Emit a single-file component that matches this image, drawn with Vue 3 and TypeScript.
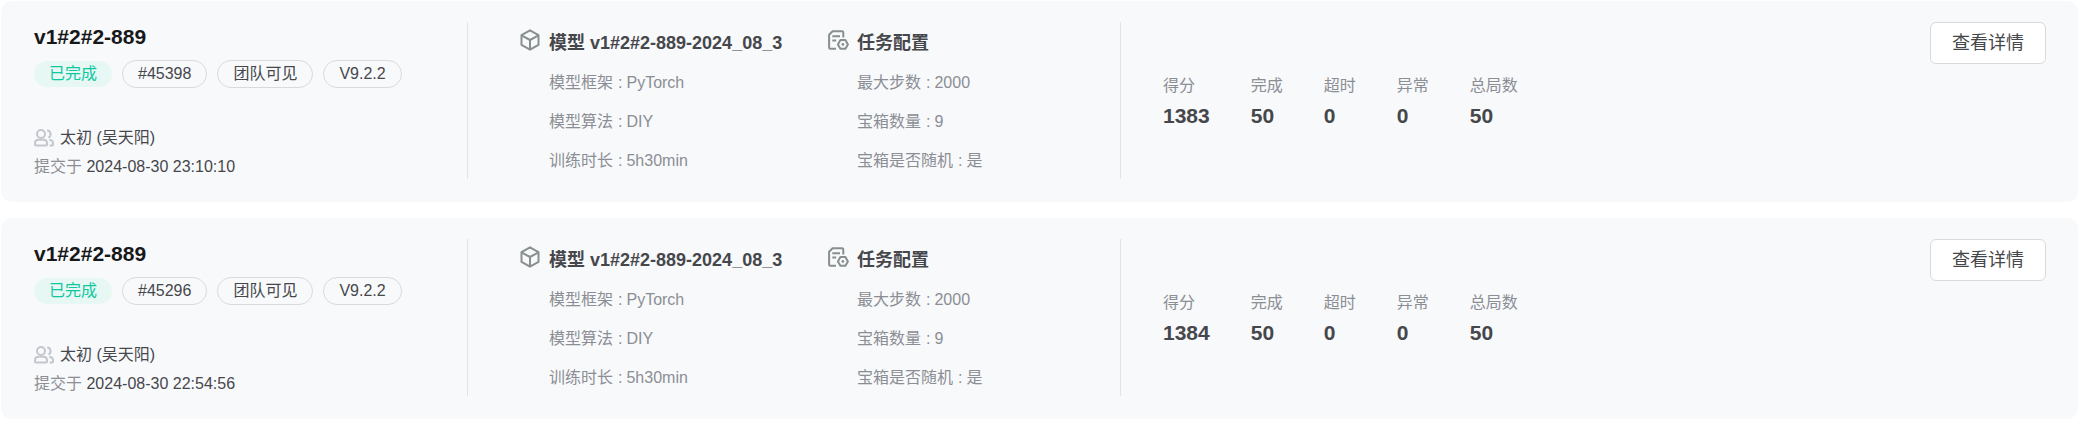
<script setup lang="ts">
interface Pair {
  label: string
  value: string
}

interface Evaluation {
  title: string
  status: string
  tags: string[]
  author: string
  submittedAt: string
  modelName: string
  model: Pair[]
  config: Pair[]
  stats: Pair[]
}

const model: Pair[] = [
  { label: '模型框架', value: 'PyTorch' },
  { label: '模型算法', value: 'DIY' },
  { label: '训练时长', value: '5h30min' },
]

const config: Pair[] = [
  { label: '最大步数', value: '2000' },
  { label: '宝箱数量', value: '9' },
  { label: '宝箱是否随机', value: '是' },
]

function makeEvaluation(id: string, submittedAt: string, score: string): Evaluation {
  return {
    title: 'v1#2#2-889',
    status: '已完成',
    tags: [id, '团队可见', 'V9.2.2'],
    author: '太初 (吴天阳)',
    submittedAt,
    modelName: '模型 v1#2#2-889-2024_08_3',
    model,
    config,
    stats: [
      { label: '得分', value: score },
      { label: '完成', value: '50' },
      { label: '超时', value: '0' },
      { label: '异常', value: '0' },
      { label: '总局数', value: '50' },
    ],
  }
}

const evaluations: Evaluation[] = [
  makeEvaluation('#45398', '2024-08-30 23:10:10', '1383'),
  makeEvaluation('#45296', '2024-08-30 22:54:56', '1384'),
]
</script>

<template>
  <main class="list">
    <article v-for="item in evaluations" :key="item.tags[0]" class="card">
      <section class="summary">
        <h2 class="title">{{ item.title }}</h2>
        <div class="tags">
          <span class="tag tag-done">{{ item.status }}</span>
          <span v-for="tag in item.tags" :key="tag" class="tag">{{ tag }}</span>
        </div>
        <div class="meta">
          <p class="author">
            <svg class="people" viewBox="0 0 20 18" aria-hidden="true">
              <circle cx="7" cy="5" r="4" />
              <path d="M4.500 10.800h5c2 0 3.500 1.500 3.500 3.500v1.200c0 .6-.4 1-1 1H2c-.6 0-1-.4-1-1v-1.200c0-2 1.500-3.500 3.500-3.500z" />
              <path d="M13.200 1.300a3.900 3.900 0 0 1 1.300 7.300M15.300 10.800c2.200.3 3.700 1.600 3.700 3.600v1.100c0 .6-.4 1-1 1h-2.300" />
            </svg>
            <span>{{ item.author }}</span>
          </p>
          <p class="submitted">提交于 <time>{{ item.submittedAt }}</time></p>
        </div>
      </section>

      <section class="details">
        <div class="group">
          <svg class="icon" viewBox="0 0 22 22" aria-hidden="true">
            <path d="M11 1.300l8.500 4.800v9.800L11 20.700l-8.500-4.800V6.100z" />
            <path d="M2.500 6.300L11 11l8.500-4.700M11 11v9.500" />
          </svg>
          <h3 class="heading">{{ item.modelName }}</h3>
          <dl class="params">
            <div v-for="p in item.model" :key="p.label" class="param">
              <dt>{{ p.label }}<span class="colon">:</span></dt>
              <dd>{{ p.value }}</dd>
            </div>
          </dl>
        </div>
        <div class="group">
          <svg class="icon" viewBox="0 0 22 22" aria-hidden="true">
            <path d="M9 19.800H3.300c-.7 0-1.200-.5-1.200-1.200V5.800l3.500-3.600h9.500c.7 0 1.200.5 1.200 1.200v5.200" />
            <path d="M5.300 7.300h7.700M5.300 11.400h3.900" />
            <path d="M13.400 11h5l2.500 4.400-2.500 4.400h-5l-2.500-4.400z" />
            <circle class="dot" cx="15.900" cy="15.400" r="1.400" />
          </svg>
          <h3 class="heading">任务配置</h3>
          <dl class="params">
            <div v-for="p in item.config" :key="p.label" class="param">
              <dt>{{ p.label }}<span class="colon">:</span></dt>
              <dd>{{ p.value }}</dd>
            </div>
          </dl>
        </div>
      </section>

      <section class="result">
        <dl class="stats">
          <div v-for="s in item.stats" :key="s.label" class="stat">
            <dt>{{ s.label }}</dt>
            <dd>{{ s.value }}</dd>
          </div>
        </dl>
        <button type="button" class="view">查看详情</button>
      </section>
    </article>
  </main>
</template>

<style>
body {
  margin: 0;
  background: #fff;
}
</style>

<style scoped>
.list {
  display: flex;
  flex-direction: column;
  gap: 16px;
  padding: 1px 7px 4px 1px;
  font-family: "Liberation Sans", "Noto Sans CJK SC", sans-serif;
  font-size: 16px;
  line-height: 24px;
  color: #46474b;
}

h2,
h3,
p,
dl,
dd {
  margin: 0;
}

.card {
  display: grid;
  grid-template-columns: minmax(0, 433px) minmax(0, 654px) minmax(0, 1fr);
  padding: 21px 32px 23px 33px;
  border-radius: 11px;
  background: #f8f9fb;
}

.summary {
  display: flex;
  flex-direction: column;
}

.title {
  font-size: 21px;
  line-height: 30px;
  color: #17181a;
}

.tags {
  display: flex;
  align-items: center;
  gap: 10px;
  margin-top: 8px;
}

.tag {
  padding: 0 15px;
  border: 1px solid #d8dade;
  border-radius: 14px;
  line-height: 26px;
  white-space: nowrap;
}

.tag-done {
  border: 0;
  background: #e7f8f4;
  color: #0fc8a0;
}

.meta {
  display: flex;
  flex-direction: column;
  gap: 5px;
  margin-top: auto;
}

.author {
  display: flex;
  align-items: center;
  gap: 6px;
}

.people {
  width: 20px;
  height: 18px;
  fill: none;
  stroke: #c3c6cc;
  stroke-width: 2;
}

.submitted {
  color: #8b8e94;
}

.submitted time {
  color: #46474b;
}

.details {
  display: grid;
  grid-template-columns: minmax(0, 308px) minmax(0, 1fr);
  padding-left: 51px;
  border: solid #e2e4e8;
  border-width: 0 1px;
}

.group {
  display: grid;
  grid-template-columns: 22px minmax(0, 1fr);
  column-gap: 8px;
  align-content: start;
  padding: 7px 0 6px;
}

.icon {
  width: 22px;
  height: 22px;
  fill: none;
  stroke: #87908f;
  stroke-width: 2;
  stroke-linejoin: round;
}

.dot {
  fill: #87908f;
  stroke: none;
}

.heading {
  font-size: 18px;
  line-height: 28px;
  white-space: nowrap;
}

.params {
  grid-column: 2;
  display: flex;
  flex-direction: column;
  gap: 15px;
  margin-top: 14px;
  color: #8b8e94;
}

.param {
  display: flex;
}

.colon {
  margin: 0 4px 0 5px;
}

.result {
  display: flex;
  justify-content: space-between;
  align-items: flex-start;
  gap: 24px;
  padding-left: 42px;
}

.stats {
  display: flex;
  align-self: center;
  gap: 41px;
  padding-top: 2px;
}

.stat {
  display: flex;
  flex-direction: column;
  gap: 4px;
  white-space: nowrap;
}

.stat dt {
  color: #8b8e94;
}

.stat dd {
  font-size: 21px;
  font-weight: 700;
  line-height: 28px;
}

.view {
  padding: 0 21px;
  border: 1px solid #d8dade;
  border-radius: 6px;
  background: #fff;
  color: #46474b;
  font-family: inherit;
  font-size: 18px;
  line-height: 40px;
  white-space: nowrap;
  cursor: pointer;
}
</style>
